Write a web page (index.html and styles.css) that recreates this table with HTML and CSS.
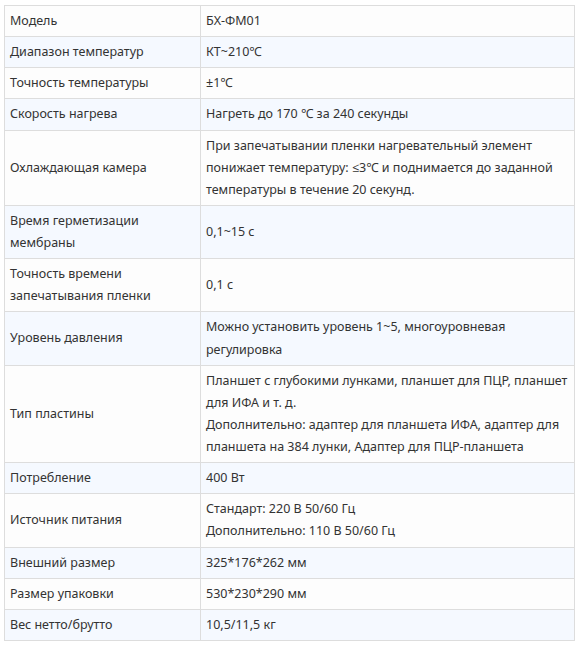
FILE: index.html
```html
<!DOCTYPE html>
<html lang="ru">
<head>
<meta charset="utf-8">
<title>Характеристики</title>
<link rel="stylesheet" href="styles.css">
</head>
<body>
<div class="wrap">
<table class="spec">
<colgroup><col class="c1"><col class="c2"></colgroup>
<tbody>
<tr><td>Модель</td><td>БХ-ФМ01</td></tr>
<tr><td>Диапазон температур</td><td>КТ~210℃</td></tr>
<tr><td>Точность температуры</td><td>±1℃</td></tr>
<tr><td>Скорость нагрева</td><td>Нагреть до 170 ℃ за 240 секунды</td></tr>
<tr><td>Охлаждающая камера</td><td>При запечатывании пленки нагревательный элемент понижает температуру: ≤3℃ и поднимается до заданной температуры в течение 20 секунд.</td></tr>
<tr><td>Время герметизации мембраны</td><td>0,1~15 с</td></tr>
<tr><td>Точность времени запечатывания пленки</td><td>0,1 с</td></tr>
<tr><td>Уровень давления</td><td>Можно установить уровень 1~5, многоуровневая регулировка</td></tr>
<tr><td>Тип пластины</td><td><p>Планшет с глубокими лунками, планшет для ПЦР, планшет для ИФА и т. д.</p><p>Дополнительно: адаптер для планшета ИФА, адаптер для планшета на 384 лунки, Адаптер для ПЦР-планшета</p></td></tr>
<tr><td>Потребление</td><td>400 Вт</td></tr>
<tr><td>Источник питания</td><td><p>Стандарт: 220 В 50/60 Гц</p><p>Дополнительно: 110 В 50/60 Гц</p></td></tr>
<tr><td>Внешний размер</td><td>325*176*262 мм</td></tr>
<tr><td>Размер упаковки</td><td>530*230*290 мм</td></tr>
<tr><td>Вес нетто/брутто</td><td>10,5/11,5 кг</td></tr>
</tbody>
</table>
</div>
</body>
</html>
```
FILE: styles.css
```css
html, body {
  margin: 0;
  padding: 0;
  background: #ffffff;
}
.wrap {
  padding: 5px 0 0 4px;
}
.spec {
  border-collapse: collapse;
  width: 570px;
  table-layout: fixed;
  font-family: "Noto Sans", "Open Sans", sans-serif;
  font-size: 12.5px;
  line-height: 22.13px;
  color: #333333;
}
.c1 { width: 196px; }
.c2 { width: 374px; }
.spec td {
  border: 1px solid #dddddd;
  padding: 4px 4px 4px 5px;
  vertical-align: middle;
  background: #fdfdfd;
}
.spec tr:nth-child(even) td {
  background: #f5f9ff;
}
.spec p {
  margin: 0;
}
```
